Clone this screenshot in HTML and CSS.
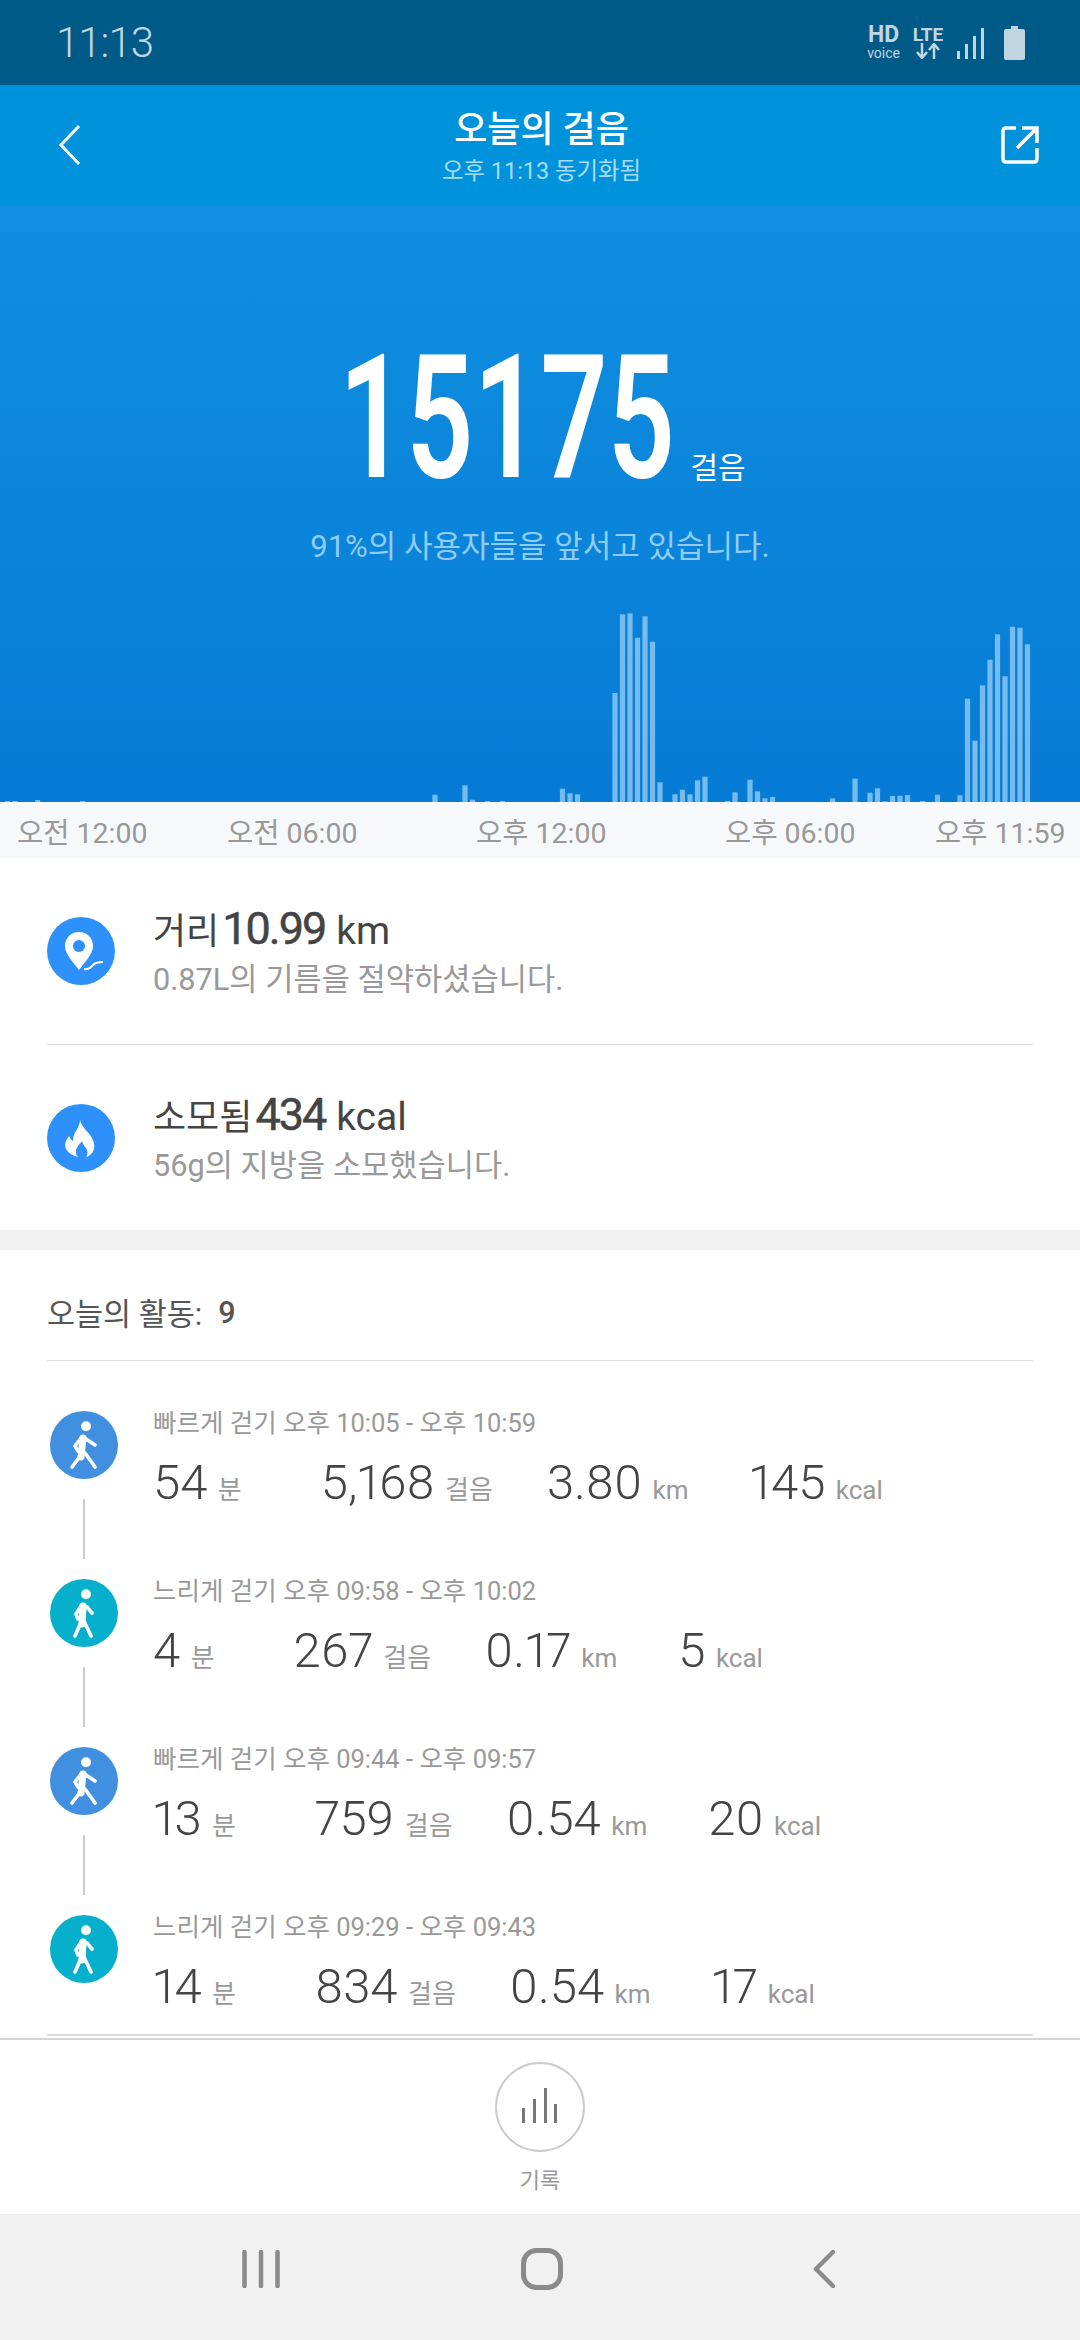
FILE: index.html
```html
<!DOCTYPE html>
<html lang="ko">
<head>
  <meta charset="UTF-8">
  <meta name="viewport" content="width=device-width, initial-scale=1.0">
  <title>오늘의 걸음</title>
  <link rel="stylesheet" href="styles.css">
</head>
<body>
  <div class="screen">

    <!-- Status bar -->
    <div class="status">
      <span class="clock">11:13</span>
      <div class="status-icons">
        <div class="net-hd"><span class="hd">HD</span><span class="voice">voice</span></div>
        <div class="net-lte">
          <span class="lte">LTE</span>
          <svg width="32" height="16" viewBox="0 0 32 16" fill="none" stroke="#c0d5e0" stroke-width="2.5">
            <path d="M10 0v14M5 9l5 6 5-6"/>
            <path d="M22 16V2M17 7l5-6 5 6"/>
          </svg>
        </div>
        <svg class="signal" width="28" height="32" viewBox="0 0 28 32" fill="#c0d5e0">
          <rect x="0" y="24" width="3" height="8"/>
          <rect x="8" y="17" width="3" height="15"/>
          <rect x="16" y="9" width="3" height="23"/>
          <rect x="24" y="1" width="3" height="31"/>
        </svg>
        <svg class="battery" width="21" height="34" viewBox="0 0 21 34" fill="#c0d5e0">
          <path d="M7 0h7v3h5q2 0 2 2v27q0 2-2 2H2q-2 0-2-2V5q0-2 2-2h5z"/>
        </svg>
      </div>
    </div>

    <!-- Title bar -->
    <div class="appbar">
      <svg class="appbar-back" width="24" height="42" viewBox="0 0 24 42" fill="none" stroke="#fff" stroke-width="3">
        <path d="M21 2L3 21l18 19"/>
      </svg>
      <div class="appbar-title">
        <h1>오늘의 걸음</h1>
        <p>오후 11:13 동기화됨</p>
      </div>
      <svg class="appbar-share" width="38" height="38" viewBox="0 0 38 38" fill="none" stroke="#fff" stroke-width="3.5">
        <path d="M15 2H5q-3 0-3 3v28q0 3 3 3h28q3 0 3-3V22"/>
        <path d="M16 22L35 3M21 2h15v15"/>
      </svg>
    </div>

    <!-- Step count and chart -->
    <div class="hero">
      <div class="steps">
        <span class="steps-num">15175</span>
        <span class="steps-unit">걸음</span>
      </div>
      <p class="steps-note">91%의 사용자들을 앞서고 있습니다.</p>
      <svg class="chart" width="1080" height="190" viewBox="0 0 1080 190" fill="#76bbee">
        <rect x="4.9" y="189" width="5.2" height="1"/>
        <rect x="12.4" y="189" width="5.2" height="1"/>
        <rect x="34.9" y="188" width="5.2" height="2"/>
        <rect x="79.9" y="189" width="5.2" height="1"/>
        <rect x="432.4" y="182.7" width="5.2" height="7.3"/>
        <rect x="462.4" y="173.3" width="5.2" height="16.7"/>
        <rect x="469.9" y="187.7" width="5.2" height="2.3"/>
        <rect x="484.9" y="189" width="5.2" height="1"/>
        <rect x="499.9" y="189" width="5.2" height="1"/>
        <rect x="559.9" y="176.7" width="5.2" height="13.3"/>
        <rect x="567.4" y="181.3" width="5.2" height="8.7"/>
        <rect x="574.9" y="182.3" width="5.2" height="7.7"/>
        <rect x="612.4" y="81" width="5.2" height="109"/>
        <rect x="619.9" y="2.3" width="5.2" height="187.7"/>
        <rect x="627.4" y="1.3" width="5.2" height="188.7"/>
        <rect x="634.9" y="25.7" width="5.2" height="164.3"/>
        <rect x="642.4" y="4.3" width="5.2" height="185.7"/>
        <rect x="649.9" y="29.7" width="5.2" height="160.3"/>
        <rect x="657.4" y="170.3" width="5.2" height="19.7"/>
        <rect x="672.4" y="182.3" width="5.2" height="7.7"/>
        <rect x="679.9" y="177.7" width="5.2" height="12.3"/>
        <rect x="687.4" y="182.3" width="5.2" height="7.7"/>
        <rect x="694.9" y="168.3" width="5.2" height="21.7"/>
        <rect x="702.4" y="164.7" width="5.2" height="25.3"/>
        <rect x="724.9" y="189" width="5.2" height="1"/>
        <rect x="732.4" y="180.3" width="5.2" height="9.7"/>
        <rect x="747.4" y="167.7" width="5.2" height="22.3"/>
        <rect x="754.9" y="179.3" width="5.2" height="10.7"/>
        <rect x="762.4" y="186.3" width="5.2" height="3.7"/>
        <rect x="769.9" y="185" width="5.2" height="5"/>
        <rect x="829.9" y="186.3" width="5.2" height="3.7"/>
        <rect x="852.4" y="166.7" width="5.2" height="23.3"/>
        <rect x="867.4" y="180.7" width="5.2" height="9.3"/>
        <rect x="874.9" y="176.3" width="5.2" height="13.7"/>
        <rect x="882.4" y="189.3" width="5.2" height="0.7"/>
        <rect x="889.9" y="184" width="5.2" height="6"/>
        <rect x="897.4" y="183.7" width="5.2" height="6.3"/>
        <rect x="904.9" y="183" width="5.2" height="7"/>
        <rect x="919.9" y="189" width="5.2" height="1"/>
        <rect x="934.9" y="182.7" width="5.2" height="7.3"/>
        <rect x="957.4" y="183.3" width="5.2" height="6.7"/>
        <rect x="964.9" y="86.7" width="5.2" height="103.3"/>
        <rect x="972.4" y="128.7" width="5.2" height="61.3"/>
        <rect x="979.9" y="73.3" width="5.2" height="116.7"/>
        <rect x="987.4" y="47.7" width="5.2" height="142.3"/>
        <rect x="994.9" y="22.3" width="5.2" height="167.7"/>
        <rect x="1002.4" y="64.3" width="5.2" height="125.7"/>
        <rect x="1009.9" y="14.7" width="5.2" height="175.3"/>
        <rect x="1017.4" y="15.7" width="5.2" height="174.3"/>
        <rect x="1024.9" y="32.3" width="5.2" height="157.7"/>
      </svg>
    </div>

    <div class="axis">
      <span>오전 12:00</span>
      <span>오전 06:00</span>
      <span>오후 12:00</span>
      <span>오후 06:00</span>
      <span>오후 11:59</span>
    </div>

    <!-- Distance and calories -->
    <div class="metrics">
      <div class="metric">
        <svg class="metric-icon" width="68" height="68" viewBox="0 0 68 68">
          <circle cx="34" cy="34" r="34" fill="#2e90fa"/>
          <path d="M32 15c-8 0-14 6-14 14 0 8 8 16 14 24 6-8 14-16 14-24 0-8-6-14-14-14z" fill="#fff"/>
          <circle cx="32" cy="29" r="6" fill="#2e90fa"/>
          <path d="M37 52c6 1 7-2 9-4s4-3 10-3" fill="none" stroke="#fff" stroke-width="2"/>
        </svg>
        <div class="metric-text">
          <div class="metric-main">거리<b>10.99</b> <span>km</span></div>
          <div class="metric-sub">0.87L의 기름을 절약하셨습니다.</div>
        </div>
      </div>
      <div class="metric">
        <svg class="metric-icon" width="68" height="68" viewBox="0 0 68 68">
          <circle cx="34" cy="34" r="34" fill="#2e90fa"/>
          <path d="M33 16c2 8 8 11 12 18 3 6 3 11 0 15-2 2-4 4-6 4 2-2 2-6 0-9-2-2-3-4-4-7-2 3-7 7-6 12 0 1 1 3 2 4-4-1-9-3-12-8-2-5 0-9 3-13 1 2 2 4 4 5 0-4 1-7 3-10 2-4 4-7 4-11z" fill="#fff"/>
        </svg>
        <div class="metric-text">
          <div class="metric-main">소모됨<b>434</b> <span>kcal</span></div>
          <div class="metric-sub">56g의 지방을 소모했습니다.</div>
        </div>
      </div>
    </div>

    <!-- Activity log -->
    <div class="activity-section">
      <div class="activity-head">오늘의 활동:<span>9</span></div>
      <div class="activity-list">

        <div class="activity">
          <div class="track">
            <svg class="walker fast" width="68" height="68" viewBox="0 0 68 68">
              <circle class="disc" cx="34" cy="34" r="34"/>
              <circle class="figure-head" cx="36" cy="15.3" r="5"/>
              <path class="figure" stroke-width="7" d="M33 27l-2 19"/>
              <path class="figure" stroke-width="3.6" d="M31 27l-6 8 3 5M36 28l9 6M31 44l-9 12M35 42l10 14"/>
            </svg>
            <i class="track-line"></i>
          </div>
          <div class="activity-body">
            <p class="activity-title">빠르게 걷기 오후 10:05 - 오후 10:59</p>
            <div class="stats">
              <span class="stat"><b>54</b> 분</span>
              <span class="stat"><b>5,168</b> 걸음</span>
              <span class="stat"><b>3.80</b> km</span>
              <span class="stat"><b>145</b> kcal</span>
            </div>
          </div>
        </div>

        <div class="activity">
          <div class="track">
            <svg class="walker slow" width="68" height="68" viewBox="0 0 68 68">
              <circle class="disc" cx="34" cy="34" r="34"/>
              <circle class="figure-head" cx="36" cy="15.3" r="5"/>
              <path class="figure" stroke-width="7" d="M33 27l-1 18"/>
              <path class="figure" stroke-width="3.6" d="M31 27l-5 8 2 5M37 28l5 6M31 43l-6 14M34 42l7 15"/>
            </svg>
            <i class="track-line"></i>
          </div>
          <div class="activity-body">
            <p class="activity-title">느리게 걷기 오후 09:58 - 오후 10:02</p>
            <div class="stats">
              <span class="stat"><b>4</b> 분</span>
              <span class="stat"><b>267</b> 걸음</span>
              <span class="stat"><b>0.17</b> km</span>
              <span class="stat"><b>5</b> kcal</span>
            </div>
          </div>
        </div>

        <div class="activity">
          <div class="track">
            <svg class="walker fast" width="68" height="68" viewBox="0 0 68 68">
              <circle class="disc" cx="34" cy="34" r="34"/>
              <circle class="figure-head" cx="36" cy="15.3" r="5"/>
              <path class="figure" stroke-width="7" d="M33 27l-2 19"/>
              <path class="figure" stroke-width="3.6" d="M31 27l-6 8 3 5M36 28l9 6M31 44l-9 12M35 42l10 14"/>
            </svg>
            <i class="track-line"></i>
          </div>
          <div class="activity-body">
            <p class="activity-title">빠르게 걷기 오후 09:44 - 오후 09:57</p>
            <div class="stats">
              <span class="stat"><b>13</b> 분</span>
              <span class="stat"><b>759</b> 걸음</span>
              <span class="stat"><b>0.54</b> km</span>
              <span class="stat"><b>20</b> kcal</span>
            </div>
          </div>
        </div>

        <div class="activity activity-last">
          <div class="track">
            <svg class="walker slow" width="68" height="68" viewBox="0 0 68 68">
              <circle class="disc" cx="34" cy="34" r="34"/>
              <circle class="figure-head" cx="36" cy="15.3" r="5"/>
              <path class="figure" stroke-width="7" d="M33 27l-1 18"/>
              <path class="figure" stroke-width="3.6" d="M31 27l-5 8 2 5M37 28l5 6M31 43l-6 14M34 42l7 15"/>
            </svg>
          </div>
          <div class="activity-body">
            <p class="activity-title">느리게 걷기 오후 09:29 - 오후 09:43</p>
            <div class="stats">
              <span class="stat"><b>14</b> 분</span>
              <span class="stat"><b>834</b> 걸음</span>
              <span class="stat"><b>0.54</b> km</span>
              <span class="stat"><b>17</b> kcal</span>
            </div>
          </div>
        </div>

      </div>
    </div>

    <!-- Bottom tab -->
    <div class="tabbar">
      <div class="tab-button">
        <svg width="36" height="38" viewBox="0 0 36 38" fill="#777">
          <rect x="0" y="20" width="3" height="15"/>
          <rect x="11" y="11" width="3" height="24"/>
          <rect x="22" y="0" width="3" height="35"/>
          <rect x="32" y="16" width="3" height="19"/>
        </svg>
      </div>
      <span class="tab-label">기록</span>
    </div>

    <!-- System navigation -->
    <div class="navbar">
      <svg width="38" height="38" viewBox="0 0 38 38" fill="none" stroke="#8a8a8a" stroke-width="4.5" stroke-linecap="round">
        <path d="M2.5 2v34M19 2v34M35.5 2v34"/>
      </svg>
      <svg width="42" height="42" viewBox="0 0 42 42" fill="none" stroke="#8a8a8a" stroke-width="5">
        <rect x="2.5" y="2.5" width="37" height="37" rx="13"/>
      </svg>
      <svg width="22" height="38" viewBox="0 0 22 38" fill="none" stroke="#8a8a8a" stroke-width="4.5" stroke-linecap="round" stroke-linejoin="round">
        <path d="M20 2L3 19l17 17"/>
      </svg>
    </div>

  </div>
</body>
</html>
```

FILE: styles.css
```css
body {
  margin: 0;
  font-family: Roboto, "Noto Sans CJK KR", sans-serif;
  background: #fff;
  color: #444;
}
p, h1 {
  margin: 0;
}
.screen {
  width: 1080px;
  height: 2340px;
  display: flex;
  flex-direction: column;
  overflow: hidden;
}

/* status bar */
.status {
  height: 85px;
  flex: none;
  background: #005a87;
  color: #c0d5e0;
  display: flex;
  align-items: center;
  justify-content: space-between;
  padding: 0 55px 0 56px;
}
.clock {
  font-size: 42px;
  font-weight: 300;
  letter-spacing: -1px;
}
.status-icons {
  display: flex;
  align-items: center;
  gap: 12px;
}
.net-hd, .net-lte {
  display: flex;
  flex-direction: column;
  align-items: center;
  line-height: 1;
}
.hd {
  font-size: 23px;
  font-weight: 700;
  line-height: 19px;
}
.voice {
  font-size: 14px;
  line-height: 14px;
  margin-top: 2px;
}
.lte {
  font-size: 19px;
  font-weight: 700;
  line-height: 17px;
}
.signal {
  margin-left: 1px;
}
.battery {
  margin-left: 7px;
}

/* title bar */
.appbar {
  height: 120px;
  flex: none;
  background: #0093dc;
  color: #fff;
  display: flex;
  align-items: center;
  justify-content: space-between;
  padding: 0 41px 0 58px;
}
.appbar-title {
  text-align: center;
  margin-top: 3px;
}
.appbar-title h1 {
  font-size: 36px;
  font-weight: 500;
  line-height: 48px;
}
.appbar-title p {
  font-size: 23.4px;
  line-height: 34px;
  color: #a7dcf6;
}

/* hero */
.hero {
  height: 597px;
  flex: none;
  background: linear-gradient(#108fe0, #067bd5);
  color: #fff;
  display: flex;
  flex-direction: column;
  align-items: center;
  overflow: hidden;
}
.steps {
  display: flex;
  align-items: flex-end;
  margin-top: 138px;
  height: 150px;
  padding-left: 5px;
}
.steps-num {
  display: block;
  width: 331px;
  font-size: 173px;
  font-weight: 600;
  line-height: 150px;
  white-space: nowrap;
  transform: scaleX(.68);
  transform-origin: left;
}
.steps-unit {
  font-size: 30px;
  line-height: 40px;
  margin-left: 20px;
  margin-bottom: 5px;
}
.steps-note {
  font-size: 31px;
  line-height: 40px;
  margin-top: 34px;
  color: #8fcdf6;
}
.chart {
  display: block;
  margin-top: auto;
}

/* time axis under the chart */
.axis {
  height: 56px;
  flex: none;
  box-sizing: border-box;
  padding-left: 17px;
  background: #f7f8fa;
  color: #999;
  font-size: 28.5px;
  display: grid;
  grid-template-columns: 210px 249px 249px 210px auto;
  align-items: center;
}
.axis span {
  white-space: nowrap;
}

/* distance, calories */
.metrics {
  height: 372px;
  flex: none;
  border-bottom: 20px solid #f0f0f0;
  box-sizing: content-box;
  padding: 0 47px;
}
.metric {
  height: 186px;
  box-sizing: border-box;
  display: flex;
  align-items: center;
  gap: 38px;
}
.metric + .metric {
  border-top: 1px solid #ddd;
}
.metric-icon {
  flex: none;
}
.metric-text {
  padding-top: 6px;
}
.metric-main {
  font-size: 36px;
  line-height: 50px;
  white-space: nowrap;
  margin-top: -2px;
}
.metric-main b {
  font-size: 45px;
  font-weight: 400;
  letter-spacing: -2px;
  margin-left: 3px;
  -webkit-text-stroke: 0.5px #444;
}
.metric-main span {
  font-size: 39px;
  margin-left: 2px;
}
.metric-sub {
  font-size: 30.7px;
  line-height: 46px;
  color: #999;
}

/* activity log */
.activity-section {
  flex: 1;
  min-height: 0;
  padding: 0 47px;
}
.activity-head {
  height: 111px;
  box-sizing: border-box;
  border-bottom: 1px solid #ddd;
  font-size: 30.5px;
  color: #555;
  display: flex;
  align-items: center;
  padding-top: 14px;
}
.activity-head span {
  margin-left: 16px;
  font-weight: 500;
}
.activity-list {
  padding: 50px 0 0 3px;
  height: 675px;
  box-sizing: border-box;
  border-bottom: 2px solid #ddd;
}
.activity {
  display: flex;
  gap: 35px;
  height: 168px;
}
.activity-last {
  height: 118px;
}
.track {
  width: 68px;
  flex: none;
  display: flex;
  flex-direction: column;
  align-items: center;
}
.track-line {
  display: block;
  width: 2px;
  height: 60px;
  margin-top: 20px;
  background: #ccc;
}
.walker .disc {
  fill: #4190e0;
}
.walker.slow .disc {
  fill: #06b0cc;
}
.figure-head {
  fill: #fff;
}
.figure {
  fill: none;
  stroke: #fff;
  stroke-linecap: round;
  stroke-linejoin: round;
}
.activity-body {
  margin-top: -5px;
}
.activity-title {
  font-size: 25.5px;
  line-height: 34px;
  color: #999;
  white-space: nowrap;
}
.stats {
  display: flex;
  margin-top: 14px;
  height: 56px;
  align-items: baseline;
  white-space: nowrap;
}
.stat {
  font-size: 26px;
  color: #999;
}
.stat b {
  font-size: 49px;
  font-weight: 300;
  color: #444;
  margin-right: 4px;
  font-variant-numeric: proportional-nums;
}
.stat:nth-child(2) {
  margin-left: 79px;
}
.stat:nth-child(3) {
  margin-left: 54px;
}
.stat:nth-child(4) {
  margin-left: 61px;
}

/* bottom tab */
.tabbar {
  height: 176px;
  flex: none;
  box-sizing: border-box;
  border-top: 2px solid #d5d5d5;
  display: flex;
  flex-direction: column;
  align-items: center;
  padding-top: 22px;
}
.tab-button {
  width: 90px;
  height: 90px;
  box-sizing: border-box;
  border: 2px solid #ccc;
  border-radius: 50%;
  display: flex;
  align-items: center;
  justify-content: center;
}
.tab-label {
  margin-top: 12px;
  font-size: 22px;
  line-height: 34px;
  color: #999;
}

/* system navigation */
.navbar {
  height: 126px;
  flex: none;
  background: #f1f1f1;
  display: grid;
  grid-template-columns: 242px 38px 241px 42px 250px 22px;
  align-items: center;
  padding-bottom: 16px;
  box-sizing: border-box;
}
.navbar svg:nth-child(1) {
  grid-column: 2;
}
.navbar svg:nth-child(2) {
  grid-column: 4;
}
.navbar svg:nth-child(3) {
  grid-column: 6;
}
```
